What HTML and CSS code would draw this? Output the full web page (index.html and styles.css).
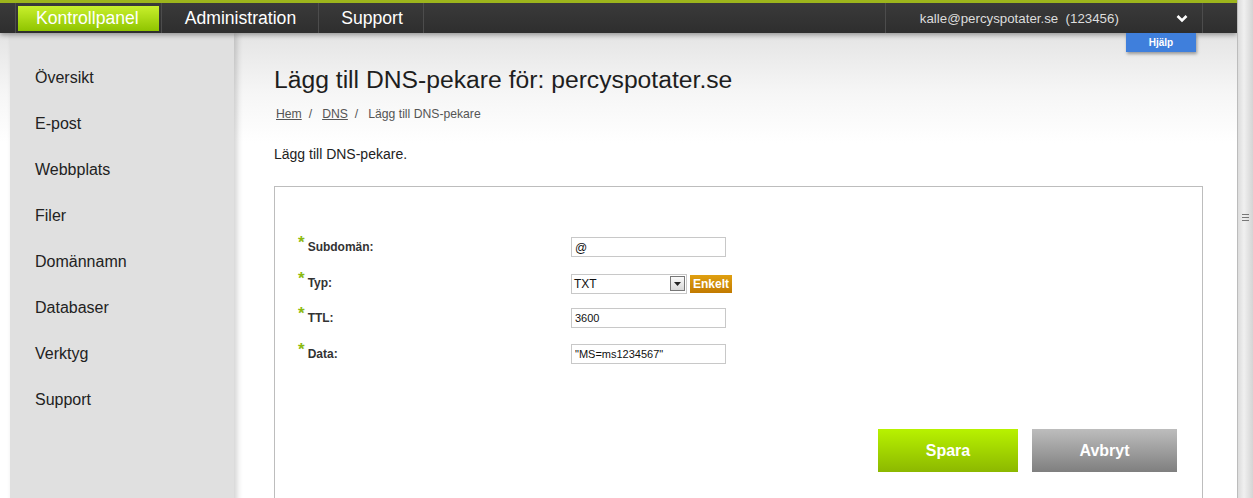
FILE: index.html
```html
<!DOCTYPE html>
<html lang="sv">
<head>
    <meta charset="UTF-8">
    <title>Lägg till DNS-pekare</title>
    <link rel="stylesheet" href="styles.css">
</head>
<body>
    <div class="page">
        <div class="topbar">
            <ul class="nav">
                <li class="active"><a href="#">Kontrollpanel</a></li>
                <li><a href="#">Administration</a></li>
                <li><a href="#">Support</a></li>
            </ul>
            <div class="user">
                <span class="user-name">kalle@percyspotater.se&nbsp;&nbsp;(123456)</span>
                <svg class="chevron" width="12" height="9" viewBox="0 0 12 9"><path d="M1.5 2 L6 6.5 L10.5 2" fill="none" stroke="#fff" stroke-width="2.6"/></svg>
            </div>
            <a class="help" href="#">Hjälp</a>
        </div>

        <div class="layout">
            <ul class="sidebar">
                <li><a href="#">Översikt</a></li>
                <li><a href="#">E-post</a></li>
                <li><a href="#">Webbplats</a></li>
                <li><a href="#">Filer</a></li>
                <li><a href="#">Domännamn</a></li>
                <li><a href="#">Databaser</a></li>
                <li><a href="#">Verktyg</a></li>
                <li><a href="#">Support</a></li>
            </ul>

            <div class="main">
                <h1>Lägg till DNS-pekare för: percyspotater.se</h1>
                <div class="crumbs">
                    <a href="#">Hem</a><span class="sep">/</span><a href="#">DNS</a><span class="sep">/</span><span>Lägg till DNS-pekare</span>
                </div>
                <p class="intro">Lägg till DNS-pekare.</p>

                <div class="form-box">
                    <div class="form-grid">
                        <label><span class="req">*</span>Subdomän:</label>
                        <div class="field"><input class="at" type="text" value="@"></div>

                        <label><span class="req">*</span>Typ:</label>
                        <div class="field">
                            <div class="select">
                                <span>TXT</span>
                                <span class="select-btn"><svg width="7" height="4" viewBox="0 0 7 4"><path d="M0 0 H7 L3.5 4 Z" fill="#222"/></svg></span>
                            </div>
                            <button class="small-btn">Enkelt</button>
                        </div>

                        <label><span class="req">*</span>TTL:</label>
                        <div class="field"><input type="text" value="3600"></div>

                        <label><span class="req">*</span>Data:</label>
                        <div class="field"><input type="text" value="&quot;MS=ms1234567&quot;"></div>
                    </div>

                    <div class="actions">
                        <button class="btn btn-save">Spara</button>
                        <button class="btn btn-cancel">Avbryt</button>
                    </div>
                </div>
            </div>
        </div>
    </div>
    <div class="scrollbar"><div class="grip"></div></div>
</body>
</html>
```

FILE: styles.css
```css
html, body {
    margin: 0;
    height: 100%;
    overflow: hidden;
}
body {
    font-family: Arial, "Liberation Sans", sans-serif;
    display: flex;
    background: #fff;
    color: #222;
}
a {
    color: inherit;
    text-decoration: none;
}
.page {
    flex: 1;
    display: flex;
    flex-direction: column;
    position: relative;
    min-width: 0;
    overflow: hidden;
}

/* top bar */
.topbar {
    flex-shrink: 0;
    height: 30px;
    border-top: 3px solid #9db51c;
    background: linear-gradient(#3a3a3a, #2e2e2e);
    display: flex;
    align-items: center;
    position: relative;
    z-index: 3;
    box-shadow: 0 2px 5px rgba(0, 0, 0, 0.35);
}
.nav {
    list-style: none;
    margin: 0 0 0 15px;
    padding: 0;
    display: flex;
    height: 100%;
    border-left: 1px solid #4c4c4c;
}
.nav li {
    display: flex;
    align-items: center;
    padding: 0 2px;
    border-right: 1px solid #4c4c4c;
}
.nav a {
    color: #fff;
    font-size: 17.6px;
    padding: 0 18px 1px 20px;
    height: 24px;
    line-height: 24px;
}
.nav li.active a {
    background: linear-gradient(#c8f02c, #8fc400);
    padding: 0 20px 1px 18px;
}
.nav li:nth-child(2) a {
    padding: 0 20px 0 21px;
}
.user {
    margin-left: 461px;
    width: 316px;
    height: 100%;
    display: flex;
    align-items: center;
    border-left: 1px solid #4c4c4c;
    border-right: 1px solid #4c4c4c;
    color: #ddd;
    font-size: 13.3px;
}
.user-name {
    margin-left: 34px;
}
.chevron {
    margin-left: auto;
    margin-right: 14px;
}
.help {
    position: absolute;
    left: 1126px;
    top: 30px;
    width: 70px;
    height: 19px;
    background: #3f7fdc;
    color: #fff;
    font-size: 10px;
    font-weight: bold;
    text-align: center;
    line-height: 20px;
    box-shadow: 1px 2px 3px rgba(0, 0, 0, 0.35);
}

/* layout */
.layout {
    flex: 1;
    display: flex;
    background: linear-gradient(#e4e4e4 0, #f6f6f6 60px, #fff 110px);
}
.sidebar {
    list-style: none;
    margin: 0 0 0 10px;
    padding: 36px 0 0 0;
    width: 224px;
    background: #e0e0e0;
    box-shadow: 3px 0 6px rgba(0, 0, 0, 0.18);
    position: relative;
    z-index: 2;
}
.sidebar li {
    height: 46px;
    padding-left: 25px;
}
.sidebar a {
    font-size: 16px;
    color: #222;
}

.main {
    flex: 1;
    padding: 0 34px 0 40px;
}
h1 {
    margin: 33px 0 0 0;
    font-size: 24.7px;
    font-weight: normal;
    color: #1e1e1e;
    line-height: 28px;
}
.crumbs {
    margin-top: 13px;
    margin-left: 2px;
    font-size: 12.2px;
    color: #555;
}
.crumbs a {
    text-decoration: underline;
}
.crumbs .sep {
    margin: 0 10px 0 7px;
}
.intro {
    margin: 25px 0 0 0;
    font-size: 14px;
    color: #222;
}

/* form */
.form-box {
    margin-top: 24px;
    border: 1px solid #bdbdbd;
    border-bottom: none;
    background: #fff;
    height: 330px;
    padding: 50px 25px 0 23px;
}
.form-grid {
    display: grid;
    grid-template-columns: 273px 1fr;
    grid-auto-rows: 35.6px;
}
.form-grid label {
    font-size: 12px;
    font-weight: bold;
    color: #333;
    line-height: 14px;
    padding-top: 1px;
}
.req {
    display: inline-block;
    color: #8cba10;
    font-size: 17px;
    line-height: 10px;
    margin-right: 3px;
    vertical-align: 3px;
}
.field {
    display: flex;
    align-items: flex-start;
}
.field input {
    width: 147px;
    height: 18px;
    border: 1px solid #c8c8c8;
    padding: 0 3px;
    margin: 0;
    font-family: Arial, "Liberation Sans", sans-serif;
    font-size: 11px;
    color: #111;
    outline: none;
}
.field input.at {
    font-size: 12px;
    padding-top: 2px;
    height: 16px;
}
.select {
    width: 112px;
    height: 18px;
    border: 1px solid #c8c8c8;
    display: flex;
    align-items: center;
    justify-content: space-between;
    font-size: 12px;
    color: #111;
    padding-left: 2px;
    margin-top: 1px;
}
.select-btn {
    width: 15px;
    height: 15px;
    margin-right: 1px;
    border: 1px solid #777;
    background: linear-gradient(#fafafa, #d8d8d8);
    display: flex;
    align-items: center;
    justify-content: center;
    box-sizing: border-box;
}
.small-btn {
    margin-left: 3px;
    height: 18px;
    padding: 0 3px;
    border: none;
    background: linear-gradient(#e0a010, #c27a00);
    color: #fff;
    font-family: Arial, "Liberation Sans", sans-serif;
    font-size: 12px;
    font-weight: bold;
    margin-top: 2px;
}
.actions {
    display: flex;
    justify-content: flex-end;
    gap: 14px;
    margin-top: 50px;
}
.btn {
    height: 43px;
    border: none;
    color: #fff;
    font-family: Arial, "Liberation Sans", sans-serif;
    font-size: 16px;
    font-weight: bold;
}
.btn-save {
    width: 140px;
    background: linear-gradient(#b8f200, #8cb800);
}
.btn-cancel {
    width: 145px;
    background: linear-gradient(#bdbdbd, #7f7f7f);
}

/* fake scrollbar */
.scrollbar {
    width: 16px;
    background: linear-gradient(90deg, #dcdcdc, #f0f0f0 40%, #d4d4d4);
    border-left: 1px solid #bcbcbc;
    box-sizing: border-box;
    display: flex;
    justify-content: center;
}
.grip {
    margin-top: 214px;
    width: 7px;
    height: 8px;
    background: repeating-linear-gradient(#777 0, #777 1px, transparent 1px, transparent 3px);
}
```
